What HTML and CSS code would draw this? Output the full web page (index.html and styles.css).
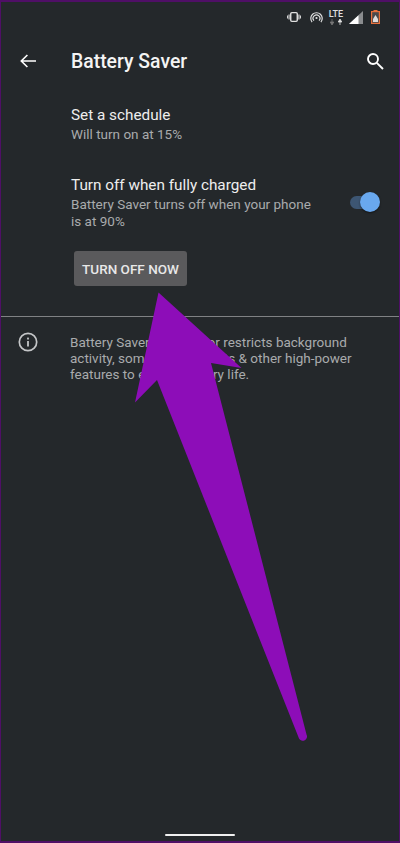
FILE: index.html
```html
<!DOCTYPE html>
<html lang="en">

<head>
    <meta charset="UTF-8">
    <meta name="viewport" content="width=device-width, initial-scale=1.0">
    <title>Battery Saver</title>
    <link rel="stylesheet" href="styles.css">
</head>

<body>
    <main class="screen">
        <div class="status-bar">
            <svg class="st-vibrate" width="14" height="10" viewBox="0 0 15 12" preserveAspectRatio="none">
                <rect x="4" y="0.8" width="7" height="10.4" rx="1.2" fill="none" stroke="#e0e0e0" stroke-width="1.5" />
                <rect x="1.6" y="3" width="1.2" height="6" fill="#e0e0e0" />
                <rect x="0" y="4.2" width="1" height="3.6" fill="#e0e0e0" />
                <rect x="12.2" y="3" width="1.2" height="6" fill="#e0e0e0" />
                <rect x="14" y="4.2" width="1" height="3.6" fill="#e0e0e0" />
            </svg>
            <svg class="st-hotspot" width="13" height="12" viewBox="0 0 14 13" fill="none" stroke="#e0e0e0" stroke-width="1.3">
                <path d="M2.2 12 A6.2 6.2 0 1 1 11.8 12" />
                <path d="M4.2 10.4 A3.7 3.7 0 1 1 9.8 10.4" />
                <circle cx="7" cy="7.6" r="1.2" fill="#e0e0e0" stroke="none" />
            </svg>
            <div class="st-lte">
                <span>LTE</span>
                <svg width="12" height="6" viewBox="0 0 12 6">
                    <path d="M2 0v3M0.2 3h3.6L2 6z" fill="#777" stroke="#777" stroke-width="0.8" />
                    <path d="M10 6V3M8.2 3h3.6L10 0z" fill="#e0e0e0" stroke="#e0e0e0" stroke-width="0.8" />
                </svg>
            </div>
            <svg class="st-signal" width="14" height="13" viewBox="0 0 14 14" preserveAspectRatio="none">
                <path d="M0 14 14 0v14z" fill="#8a8c8e" />
                <path d="M0 14 9.5 4.5V14z" fill="#fff" />
            </svg>
            <svg class="st-battery" width="9" height="14" viewBox="0 0 9 14">
                <rect x="2.5" y="0" width="4" height="1.5" fill="#e8703c" />
                <rect x="0.6" y="1.6" width="7.8" height="11.8" fill="#4a4a4c" stroke="#e8703c" stroke-width="1.2" />
                <path d="M2 9 4.5 5 7 9v3H2z" fill="#ddd" />
            </svg>
        </div>

        <header class="app-bar">
            <svg class="back-icon" width="16" height="14" viewBox="0 0 16 14" fill="none" stroke="#fff" stroke-width="1.6">
                <path d="M16 7H1.5M7.4 1 1.3 7l6.1 6" />
            </svg>
            <h1 class="title">Battery Saver</h1>
            <svg class="search-icon" width="18" height="18" viewBox="0 0 18 18" fill="none" stroke="#fff" stroke-width="1.9">
                <circle cx="7" cy="7" r="5" />
                <path d="M10.8 10.8 17 17" />
            </svg>
        </header>

        <section class="settings">
            <div class="item">
                <div class="item-title">Set a schedule</div>
                <div class="item-sub">Will turn on at 15%</div>
            </div>

            <div class="item item-toggle">
                <div class="item-text">
                    <div class="item-title">Turn off when fully charged</div>
                    <div class="item-sub">Battery Saver turns off when your phone is at 90%</div>
                </div>
                <div class="toggle">
                    <div class="toggle-track"></div>
                    <div class="toggle-thumb"></div>
                </div>
            </div>

            <button class="btn-off">TURN OFF NOW</button>
        </section>

        <hr class="divider">

        <section class="info">
            <svg class="info-icon" width="20" height="20" viewBox="0 0 20 20">
                <circle cx="10" cy="10" r="8.7" fill="none" stroke="#c4c6c8" stroke-width="1.7" />
                <rect x="9.1" y="9" width="1.8" height="5.5" fill="#c4c6c8" />
                <rect x="9.1" y="5.6" width="1.8" height="1.9" fill="#c4c6c8" />
            </svg>
            <p class="info-text">Battery Saver turns off or restricts background activity, some visual effects &amp; other high-power features to extend battery life.</p>
        </section>

        <div class="home-bar"></div>

        <!-- annotation arrow on top of the screenshot -->
        <svg class="arrow" width="400" height="843" viewBox="0 0 400 843">
            <path d="M158.5 292.5 241.5 368 211 363 306.5 734.5A4 4 0 0 1 299 738.5L157 380 135 402.5Z" fill="#8d0db8" />
        </svg>
    </main>
</body>

</html>
```

FILE: styles.css
```css
html {
    box-sizing: border-box;
    font-family: Roboto, sans-serif;
    font-size: 16px;
}

*,
*:before,
*:after {
    box-sizing: inherit;
}

body {
    margin: 0;
    background-color: #24282b;
}

.screen {
    position: relative;
    display: flex;
    flex-direction: column;
    width: 400px;
    height: 843px;
    overflow: hidden;
    background-color: #24282b;
    border: 1px solid #4f0f66;
    border-top-width: 2px;
    border-bottom-width: 2px;
}

/******* Status bar ********/
.status-bar {
    display: flex;
    align-items: center;
    justify-content: flex-end;
    height: 30px;
    padding-right: 19px;
}

.st-vibrate {
    margin-right: 9px;
}

.st-hotspot {
    margin-right: 6px;
}

.st-lte {
    display: flex;
    flex-direction: column;
    align-items: center;
    margin-right: 6px;
    color: #e0e0e0;
    font-size: 9px;
    font-weight: 500;
    line-height: 9px;
}

.st-lte svg {
    display: block;
}

.st-signal {
    margin-right: 8px;
}

/******* App bar ********/
.app-bar {
    display: flex;
    align-items: center;
    height: 58px;
    padding-left: 19px;
    padding-right: 15px;
}

.back-icon {
    margin-right: 35px;
}

.title {
    flex: 1;
    margin: 0;
    color: #f4f4f4;
    font-size: 19.4px;
    font-weight: 500;
}

/******* Settings ********/
.settings {
    padding-left: 70px;
    padding-right: 19px;
    padding-top: 15px;
}

.item {
    margin-bottom: 32px;
}

.item-toggle {
    display: flex;
    align-items: center;
    margin-bottom: 0;
}

.item-text {
    flex: 1;
    padding-right: 30px;
}

.item-title {
    color: #eeeeee;
    font-size: 15.3px;
    line-height: 21px;
}

.item-sub {
    color: #a9abad;
    font-size: 13.5px;
    line-height: 17px;
}

.toggle {
    position: relative;
    width: 30px;
    height: 22px;
}

.toggle-track {
    position: absolute;
    left: 0;
    top: 4px;
    width: 26px;
    height: 13px;
    border-radius: 7px;
    background-color: #3d5673;
}

.toggle-thumb {
    position: absolute;
    right: 0;
    top: 0;
    width: 20px;
    height: 20px;
    border-radius: 50%;
    background-color: #69a8ee;
    box-shadow: 0 1px 2px rgba(0, 0, 0, .5);
}

.btn-off {
    display: block;
    width: 113px;
    height: 35px;
    margin-top: 21px;
    margin-left: 3px;
    border: none;
    border-radius: 3px;
    background-color: #5a5a5c;
    color: #e8e8e8;
    font-family: Roboto, sans-serif;
    font-size: 13.5px;
    font-weight: 500;
    padding: 0;
}

.divider {
    width: 100%;
    height: 1px;
    margin: 30px 0 0;
    border: none;
    background-color: #808284;
}

/******* Info ********/
.info {
    display: flex;
    align-items: flex-start;
    padding-left: 17px;
    padding-right: 20px;
    padding-top: 15px;
}

.info-icon {
    flex: none;
    margin-right: 32px;
}

.info-text {
    margin: 2px 0 0;
    color: #a9abad;
    font-size: 13.5px;
    line-height: 16px;
}

.home-bar {
    width: 70px;
    height: 2px;
    margin: auto auto 5px;
    border-radius: 1px;
    background-color: #f0f0f0;
}

.arrow {
    position: absolute;
    left: -1px;
    top: -2px;
}
```
